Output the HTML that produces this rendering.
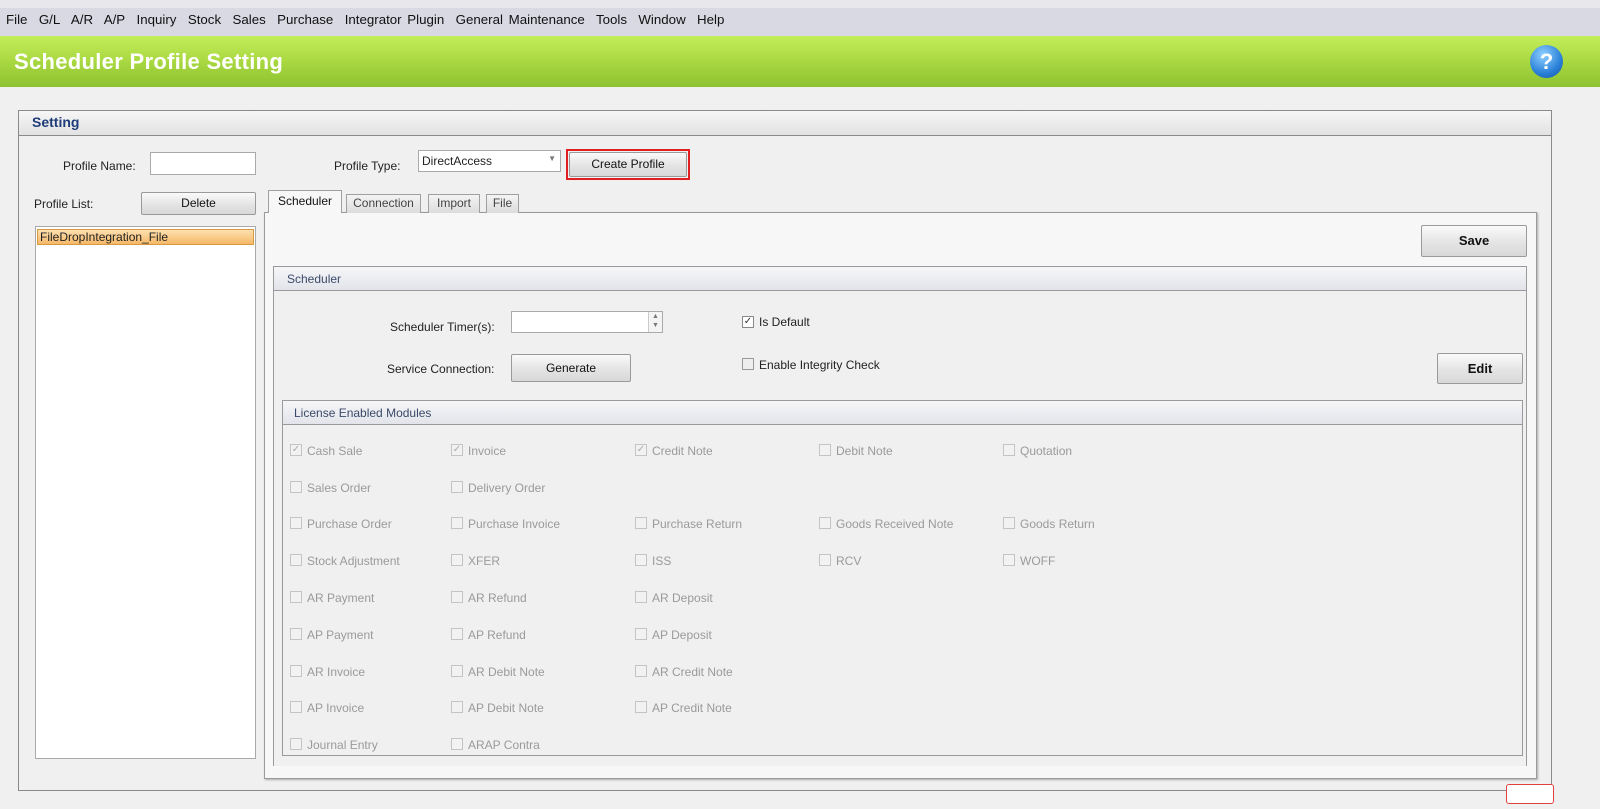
<!DOCTYPE html>
<html><head><meta charset="utf-8"><style>
*{box-sizing:border-box;margin:0;padding:0}
body{width:1600px;height:809px;overflow:hidden;background:#f0f0f0;font-family:"Liberation Sans",sans-serif;font-size:12px;color:#222;position:relative}
.a{position:absolute}
.btn{position:absolute;border:1px solid #9a9a9a;border-radius:2px;background:linear-gradient(#fafafa,#e4e4e4 55%,#d8d8d8);text-align:center;font-size:12px;color:#111}
.lbl{position:absolute;font-size:12px;color:#222;white-space:nowrap}
.cb{position:absolute;width:12px;height:12px;border:1px solid #c4c4c4;background:#f2f2f2;font-size:10px;line-height:10px;text-align:center;color:#aaa}
.ct{position:absolute;font-size:12px;color:#9a9a9a;white-space:nowrap}
.tab{position:absolute;top:194px;height:19px;border:1px solid #a0a0a0;border-bottom:none;background:linear-gradient(#f4f4f4,#dcdcdc);font-size:12px;text-align:center;line-height:17px;color:#444}
</style></head><body>
<div class="a" style="left:0;top:0;width:1600px;height:8px;background:#e8e8ec"></div>
<div class="a" style="left:0;top:8px;width:1600px;height:28px;background:#d8d9e2"></div>
<div class="a" style="left:6px;top:12px;font-size:13.3px;color:#111;word-spacing:2px;white-space:nowrap">File&nbsp; G/L&nbsp; A/R&nbsp; A/P&nbsp; Inquiry&nbsp; Stock&nbsp; Sales&nbsp; Purchase&nbsp; Integrator Plugin&nbsp; General Maintenance&nbsp; Tools&nbsp; Window&nbsp; Help</div>
<div class="a" style="left:0;top:36px;width:1600px;height:51px;background:linear-gradient(#c4ee5a,#a6d63f 55%,#8fc232)"></div>
<div class="a" style="left:14px;top:49px;font-size:22px;font-weight:bold;color:#fff;letter-spacing:0.3px">Scheduler Profile Setting</div>
<div class="a" style="left:1530px;top:45px;width:33px;height:33px;border-radius:50%;background:radial-gradient(circle at 40% 30%,#8fd0ff,#2a80d8 60%,#1654a0);color:#fff;font-weight:bold;font-size:22px;text-align:center;line-height:33px">?</div>

<div class="a" style="left:18px;top:110px;width:1534px;height:681px;border:1px solid #8a8a8a;background:#f0f0f0"></div>
<div class="a" style="left:19px;top:111px;width:1532px;height:25px;background:linear-gradient(#f6f6f6,#e2e2e2);border-bottom:1px solid #8a8a8a"></div>
<div class="a" style="left:32px;top:114px;font-size:14px;font-weight:bold;color:#1e3c78">Setting</div>

<div class="lbl" style="left:63px;top:159px">Profile Name:</div>
<div class="a" style="left:150px;top:152px;width:106px;height:23px;border:1px solid #aaa;background:#fff"></div>
<div class="lbl" style="left:334px;top:159px">Profile Type:</div>
<div class="a" style="left:418px;top:150px;width:143px;height:22px;border:1px solid #aaa;background:#fff"><span style="position:absolute;left:3px;top:3px">DirectAccess</span><span style="position:absolute;right:4px;top:3px;font-size:8px;color:#777">▼</span></div>
<div class="a" style="left:566px;top:149px;width:124px;height:31px;border:2px solid #e02020"></div>
<div class="btn" style="left:569px;top:152px;width:118px;height:25px;line-height:23px">Create Profile</div>

<div class="lbl" style="left:34px;top:197px">Profile List:</div>
<div class="btn" style="left:141px;top:192px;width:115px;height:23px;line-height:21px">Delete</div>
<div class="a" style="left:35px;top:226px;width:221px;height:533px;border:1px solid #aaa;background:#fff"></div>
<div class="a" style="left:37px;top:229px;width:217px;height:16px;border:1px solid #d89a40;background:linear-gradient(#fde0b0,#f6b868);font-size:12px;line-height:14px;padding-left:2px">FileDropIntegration_File</div>

<div class="a" style="left:264px;top:212px;width:1273px;height:567px;border:1px solid #9a9a9a;background:#f7f7f7;box-shadow:1px 1px 2px #aaa"></div>
<div class="tab" style="left:268px;top:190px;height:23px;width:74px;background:#f7f7f7;color:#111;line-height:21px">Scheduler</div>
<div class="tab" style="left:346px;width:75px">Connection</div>
<div class="tab" style="left:428px;width:52px">Import</div>
<div class="tab" style="left:486px;width:33px">File</div>

<div class="btn" style="left:1421px;top:225px;width:106px;height:32px;line-height:30px;font-weight:bold;font-size:13px">Save</div>

<div class="a" style="left:273px;top:266px;width:1254px;height:500px;border:1px solid #9a9a9a;border-bottom:none;background:#f0f0f0"></div>
<div class="a" style="left:274px;top:267px;width:1252px;height:24px;background:linear-gradient(#f6f6f8,#e2e4ea);border-bottom:1px solid #9a9a9a"></div>
<div class="a" style="left:287px;top:272px;color:#3a4a6a">Scheduler</div>

<div class="lbl" style="left:390px;top:320px">Scheduler Timer(s):</div>
<div class="a" style="left:511px;top:311px;width:152px;height:22px;border:1px solid #aaa;background:#fff"></div>
<div class="a" style="left:648px;top:312px;width:14px;height:20px;border-left:1px solid #ccc;background:#f4f4f4;font-size:7px;line-height:9px;text-align:center;color:#777">▲<br>▼</div>
<div class="lbl" style="left:387px;top:362px">Service Connection:</div>
<div class="btn" style="left:511px;top:354px;width:120px;height:28px;line-height:26px">Generate</div>
<div class="cb" style="left:742px;top:316px;border-color:#888;background:#fff;color:#333">✓</div>
<div class="lbl" style="left:759px;top:315px">Is Default</div>
<div class="cb" style="left:742px;top:358px;border-color:#999;background:#eee"></div>
<div class="lbl" style="left:759px;top:358px">Enable Integrity Check</div>
<div class="btn" style="left:1437px;top:353px;width:86px;height:31px;line-height:29px;font-weight:bold;font-size:13px">Edit</div>

<div class="a" style="left:282px;top:400px;width:1241px;height:356px;border:1px solid #9a9a9a;background:#f0f0f0"></div>
<div class="a" style="left:283px;top:401px;width:1239px;height:24px;background:linear-gradient(#f6f6f8,#e2e4ea);border-bottom:1px solid #9a9a9a"></div>
<div class="a" style="left:294px;top:406px;color:#3a4a6a">License Enabled Modules</div>

<div class="cb" style="left:290px;top:444px">✓</div><div class="ct" style="left:307px;top:444px">Cash Sale</div>
<div class="cb" style="left:451px;top:444px">✓</div><div class="ct" style="left:468px;top:444px">Invoice</div>
<div class="cb" style="left:635px;top:444px">✓</div><div class="ct" style="left:652px;top:444px">Credit Note</div>
<div class="cb" style="left:819px;top:444px"></div><div class="ct" style="left:836px;top:444px">Debit Note</div>
<div class="cb" style="left:1003px;top:444px"></div><div class="ct" style="left:1020px;top:444px">Quotation</div>

<div class="cb" style="left:290px;top:481px"></div><div class="ct" style="left:307px;top:481px">Sales Order</div>
<div class="cb" style="left:451px;top:481px"></div><div class="ct" style="left:468px;top:481px">Delivery Order</div>

<div class="cb" style="left:290px;top:517px"></div><div class="ct" style="left:307px;top:517px">Purchase Order</div>
<div class="cb" style="left:451px;top:517px"></div><div class="ct" style="left:468px;top:517px">Purchase Invoice</div>
<div class="cb" style="left:635px;top:517px"></div><div class="ct" style="left:652px;top:517px">Purchase Return</div>
<div class="cb" style="left:819px;top:517px"></div><div class="ct" style="left:836px;top:517px">Goods Received Note</div>
<div class="cb" style="left:1003px;top:517px"></div><div class="ct" style="left:1020px;top:517px">Goods Return</div>

<div class="cb" style="left:290px;top:554px"></div><div class="ct" style="left:307px;top:554px">Stock Adjustment</div>
<div class="cb" style="left:451px;top:554px"></div><div class="ct" style="left:468px;top:554px">XFER</div>
<div class="cb" style="left:635px;top:554px"></div><div class="ct" style="left:652px;top:554px">ISS</div>
<div class="cb" style="left:819px;top:554px"></div><div class="ct" style="left:836px;top:554px">RCV</div>
<div class="cb" style="left:1003px;top:554px"></div><div class="ct" style="left:1020px;top:554px">WOFF</div>

<div class="cb" style="left:290px;top:591px"></div><div class="ct" style="left:307px;top:591px">AR Payment</div>
<div class="cb" style="left:451px;top:591px"></div><div class="ct" style="left:468px;top:591px">AR Refund</div>
<div class="cb" style="left:635px;top:591px"></div><div class="ct" style="left:652px;top:591px">AR Deposit</div>

<div class="cb" style="left:290px;top:628px"></div><div class="ct" style="left:307px;top:628px">AP Payment</div>
<div class="cb" style="left:451px;top:628px"></div><div class="ct" style="left:468px;top:628px">AP Refund</div>
<div class="cb" style="left:635px;top:628px"></div><div class="ct" style="left:652px;top:628px">AP Deposit</div>

<div class="cb" style="left:290px;top:665px"></div><div class="ct" style="left:307px;top:665px">AR Invoice</div>
<div class="cb" style="left:451px;top:665px"></div><div class="ct" style="left:468px;top:665px">AR Debit Note</div>
<div class="cb" style="left:635px;top:665px"></div><div class="ct" style="left:652px;top:665px">AR Credit Note</div>

<div class="cb" style="left:290px;top:701px"></div><div class="ct" style="left:307px;top:701px">AP Invoice</div>
<div class="cb" style="left:451px;top:701px"></div><div class="ct" style="left:468px;top:701px">AP Debit Note</div>
<div class="cb" style="left:635px;top:701px"></div><div class="ct" style="left:652px;top:701px">AP Credit Note</div>

<div class="cb" style="left:290px;top:738px"></div><div class="ct" style="left:307px;top:738px">Journal Entry</div>
<div class="cb" style="left:451px;top:738px"></div><div class="ct" style="left:468px;top:738px">ARAP Contra</div>

<div class="a" style="left:1506px;top:784px;width:48px;height:20px;border:1px solid #e04040;border-radius:3px;background:#fff"></div>
</body></html>
